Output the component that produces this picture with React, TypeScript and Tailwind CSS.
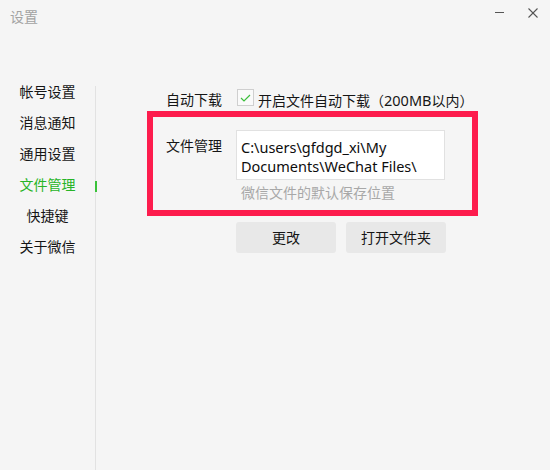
import React from "react";

const FONT = { fontFamily: '"Noto Sans", "Noto Sans CJK SC", sans-serif' };

const menu = ["帐号设置", "消息通知", "通用设置", "文件管理", "快捷键", "关于微信"];

export default function App() {
  return (
    <div
      className="w-[550px] h-[470px] bg-[#f5f5f5] flex flex-col overflow-hidden text-[14px] text-[#151515]"
      style={FONT}
    >
      {/* title bar */}
      <div className="h-[77px] flex items-start justify-between shrink-0">
        <div className="pl-[10px] pt-[7px] leading-[20px] text-[#a3a3a3]">设置</div>
        <div className="flex items-start pt-[8px] pr-[12px] gap-[24px]">
          <svg width="9" height="10" viewBox="0 0 9 10">
            <line x1="0" y1="4.5" x2="9" y2="4.5" stroke="#555" strokeWidth="1" />
          </svg>
          <svg width="10" height="10" viewBox="0 0 10 10">
            <line x1="0.5" y1="0.5" x2="9.5" y2="9.5" stroke="#555" strokeWidth="1.1" />
            <line x1="9.5" y1="0.5" x2="0.5" y2="9.5" stroke="#555" strokeWidth="1.1" />
          </svg>
        </div>
      </div>

      {/* body */}
      <div className="flex flex-1">
        {/* sidebar */}
        <div className="w-[96px] shrink-0 mt-[9px] border-r border-[#e2e2e2]">
          <div className="-mt-[10px] flex flex-col">
            {menu.map((m) => {
              const active = m === "文件管理";
              return (
                <div
                  key={m}
                  className={
                    "relative h-[31px] flex items-center justify-center leading-[20px] " +
                    (active ? "text-[#27b427]" : "text-[#151515]")
                  }
                >
                  {m}
                  {active && (
                    <div className="absolute right-[-2px] top-[12px] w-[2px] h-[11px] bg-[#3ac23a]" />
                  )}
                </div>
              );
            })}
          </div>
        </div>

        {/* content */}
        <div className="flex-1 pl-[51px] pt-[12px] flex flex-col">
          {/* row 1 */}
          <div className="h-[22px] flex items-center">
            <div className="w-[75px] text-right leading-[20px]">自动下载</div>
            <div className="ml-[15px] -mt-[5px] w-[17px] h-[17px] border border-[#cfcfcf] bg-[#fafafa] flex items-center justify-center">
              <svg width="11" height="8" viewBox="0 0 11 8">
                <polyline points="1,4 4,7 10,1" fill="none" stroke="#3cbf3c" strokeWidth="1.2" />
              </svg>
            </div>
            <div className="ml-[4px] leading-[20px]">
              开启文件自动下载（<span className="text-[14.5px]">200MB</span>以内）
            </div>
          </div>

          {/* red box */}
          <div className="w-[331px] h-[105px] border-[6px] border-[#fd1c4d] flex flex-col">
            <div className="flex pt-[13px]">
              <div className="w-[69px] text-right leading-[20px] mt-[6px]">文件管理</div>
              <div className="ml-[14px] flex flex-col">
                <div className="w-[209px] h-[50px] bg-white border border-[#e1e1e1] pl-[4px] pt-[7px] leading-[19px] text-[14.5px] text-[#0d0d0d]">
                  C:\users\gfdgd_xi\My
                  <br />
                  Documents\WeChat Files\
                </div>
                <div className="mt-[3px] pl-[5px] leading-[20px] text-[#a8a8a8]">微信文件的默认保存位置</div>
              </div>
            </div>
          </div>

          {/* buttons */}
          <div className="mt-[6px] ml-[89px] flex gap-[10px]">
            <button className="w-[100px] h-[31px] bg-[#e8e8e8] rounded-[3px] text-[14px] text-[#151515]">
              更改
            </button>
            <button className="w-[100px] h-[31px] bg-[#e8e8e8] rounded-[3px] text-[14px] text-[#151515]">
              打开文件夹
            </button>
          </div>
        </div>
      </div>
    </div>
  );
}
